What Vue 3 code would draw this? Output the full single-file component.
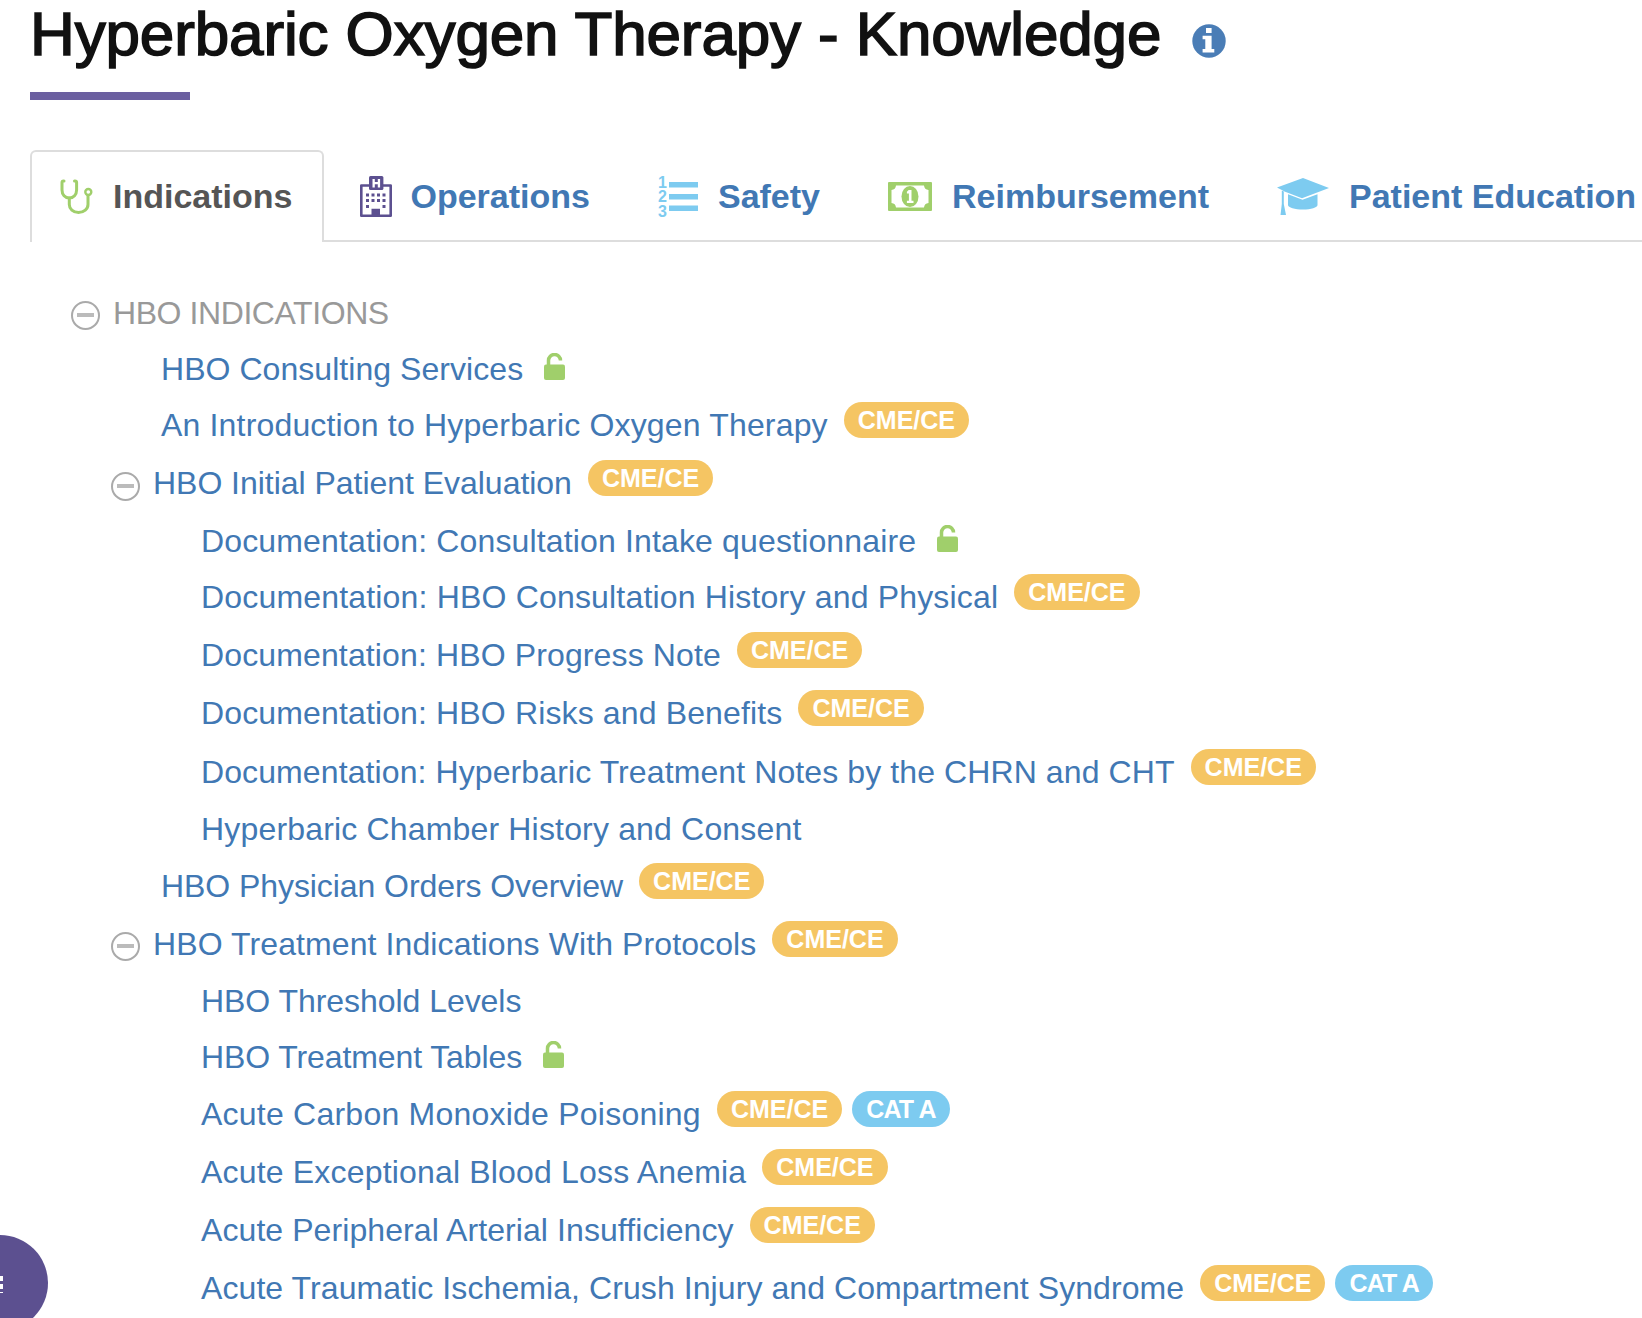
<script setup>
// track nudges each label's letter-spacing so its width follows the original font
const rows = [
  { text: 'HBO INDICATIONS', level: 'head', toggle: true, track: -0.42 },
  { text: 'HBO Consulting Services', level: 'one', lock: true, track: 0.05 },
  { text: 'An Introduction to Hyperbaric Oxygen Therapy', level: 'one', badges: ['CME/CE'], track: 0.17 },
  { text: 'HBO Initial Patient Evaluation', level: 'group', toggle: true, badges: ['CME/CE'], track: -0.03 },
  { text: 'Documentation: Consultation Intake questionnaire', level: 'two', lock: true, track: 0.15 },
  { text: 'Documentation: HBO Consultation History and Physical', level: 'two', badges: ['CME/CE'], track: 0.18 },
  { text: 'Documentation: HBO Progress Note', level: 'two', badges: ['CME/CE'], track: 0.13 },
  { text: 'Documentation: HBO Risks and Benefits', level: 'two', badges: ['CME/CE'], track: 0.14 },
  { text: 'Documentation: Hyperbaric Treatment Notes by the CHRN and CHT', level: 'two', badges: ['CME/CE'], track: 0.1 },
  { text: 'Hyperbaric Chamber History and Consent', level: 'two', track: 0.17 },
  { text: 'HBO Physician Orders Overview', level: 'one', badges: ['CME/CE'], track: -0.07 },
  { text: 'HBO Treatment Indications With Protocols', level: 'group', toggle: true, badges: ['CME/CE'], track: 0.1 },
  { text: 'HBO Threshold Levels', level: 'two', track: -0.05 },
  { text: 'HBO Treatment Tables', level: 'two', lock: true, track: -0.1 },
  { text: 'Acute Carbon Monoxide Poisoning', level: 'two', badges: ['CME/CE', 'CAT A'], track: 0.23 },
  { text: 'Acute Exceptional Blood Loss Anemia', level: 'two', badges: ['CME/CE'], track: 0.18 },
  { text: 'Acute Peripheral Arterial Insufficiency', level: 'two', badges: ['CME/CE'], track: 0.08 },
  { text: 'Acute Traumatic Ischemia, Crush Injury and Compartment Syndrome', level: 'two', badges: ['CME/CE', 'CAT A'], track: 0.08 }
]
</script>

<template>
  <div class="page">
    <header class="title-wrap">
      <h1 class="title">Hyperbaric Oxygen Therapy - Knowledge</h1>
      <svg class="info" viewBox="0 0 34 34">
        <circle cx="17" cy="17" r="16.700" fill="#4a7db6" />
        <path d="M14 4h5.600v5H14zM10.600 11.700h9v13.200h2.700v3.500H10.600v-3.500h2.700v-9.700h-2.700z" fill="#fff" />
      </svg>
    </header>
    <div class="rule"></div>

    <nav class="tabs">
      <a class="tab active">
        <svg class="ico" width="33" height="35" viewBox="0 0 33 35" fill="none" stroke="#a0cf6b" stroke-width="3" stroke-linecap="round">
          <path d="M4 2H3.500Q2 2 2 3.500V11c0 4.500 3 8 7.300 8s7.300-3.500 7.300-8V3.500Q16.600 2 15 2h-.5" />
          <path d="M9.300 19v6.500c0 4.500 3.700 8 9.200 8s9.500-3.500 9.500-8V16.500" />
          <circle cx="28.300" cy="13" r="3" stroke-width="2.400" />
        </svg>
        <span>Indications</span>
      </a>
      <a class="tab narrow">
        <svg class="ico" width="32" height="41" viewBox="0 0 32 41">
          <path d="M1.300 9.500h29.400v30.200H1.300z" fill="#fff" stroke="#5c5090" stroke-width="2.600" stroke-linejoin="round" />
          <rect x="9" width="14.400" height="14" rx="1.500" fill="#5c5090" />
          <path d="M12.500 3h2.300v3h3V3h2.300v8.500h-2.300V8.300h-3v3.200h-2.300z" fill="#fff" />
          <path d="M6 17.500h3v3H6zM11.500 17.500h3v3h-3zM17 17.500h3v3h-3zM22.500 17.500h3v3h-3zM6 23h3v3H6zM11.500 23h3v3h-3zM17 23h3v3h-3zM22.500 23h3v3h-3zM6 29h3v3H6zM22.500 29h3v3h-3zM11.500 32.700H20V41h-8.500z" fill="#5c5090" />
        </svg>
        <span>Operations</span>
      </a>
      <a class="tab">
        <svg class="ico list-ico" width="40" height="49" viewBox="0 -4 40 49" fill="#7dcbf0">
          <rect x="11" y="6" width="29" height="5.500" />
          <rect x="11" y="18" width="29" height="5.500" />
          <rect x="11" y="29.500" width="29" height="5.500" />
          <text x="0" y="11.500" class="num">1</text>
          <text x="0" y="25.500" class="num">2</text>
          <text x="0" y="40.500" class="num">3</text>
        </svg>
        <span>Safety</span>
      </a>
      <a class="tab">
        <svg class="ico" width="44" height="29" viewBox="0 0 44 29">
          <rect width="44" height="29" rx="1" fill="#a0cf6b" />
          <path d="M8 3.500h28a5 5 0 0 0 4.500 4.500v13a5 5 0 0 0-4.500 4.500H8A5 5 0 0 0 3.500 21V8A5 5 0 0 0 8 3.500z" fill="#fff" />
          <ellipse cx="22" cy="14.500" rx="8.500" ry="10.500" fill="#a0cf6b" />
          <path d="M20.700 8h2.800v10.800h2V21h-6.600v-2.200h2v-7.300h-2V9.800z" fill="#fff" />
        </svg>
        <span>Reimbursement</span>
      </a>
      <a class="tab">
        <svg class="ico" width="52" height="37" viewBox="0 0 52 37" fill="#7dcbf0">
          <path d="M26 0l26 10-27 10.200L7.500 13.500 4.800 12 0 9.500z" />
          <path d="M11 16.300l14.500 5.500 15-5.500V27c0 2.500-6.500 4.500-14.500 4.500S11 29.500 11 27z" />
          <path d="M4.800 12.500l2 1V26l2.200 11H3.500l1.300-11z" />
        </svg>
        <span>Patient Education</span>
      </a>
      <div class="tab-line"></div>
    </nav>

    <ul class="tree">
      <li v-for="row in rows" :key="row.text" class="row" :class="[row.level, { tall: row.badges }]">
        <span v-if="row.toggle" class="toggle"></span>
        <a class="label" :style="{ letterSpacing: row.track + 'px' }">{{ row.text }}</a>
        <svg v-if="row.lock" class="lock" width="21" height="27" viewBox="0 0 21 27">
          <path d="M4.500 12V7.500a6 6 0 0 1 12 0" fill="none" stroke="#a0cf6b" stroke-width="3.500" />
          <rect y="11.500" width="21" height="15.500" rx="2" fill="#a0cf6b" />
        </svg>
        <span v-if="row.badges" class="badges">
          <span v-for="b in row.badges" :key="b" class="badge" :class="{ cat: b === 'CAT A' }">{{ b }}</span>
        </span>
      </li>
    </ul>

    <div class="chat"><span class="chat-mark"></span></div>
  </div>
</template>

<style scoped>
.page {
  height: 1318px;
  overflow: hidden;
  position: relative;
  background: #fff;
  font-family: "Liberation Sans", Arial, sans-serif;
}

.title-wrap {
  display: flex;
  align-items: flex-start;
  padding-left: 30px;
  height: 92px;
}

.title {
  margin: 0;
  font-size: 62px;
  line-height: 68px;
  font-weight: 400;
  color: #111;
  -webkit-text-stroke: 1.6px #111;
  letter-spacing: -0.13px;
  white-space: nowrap;
}

.info {
  width: 34px;
  height: 34px;
  margin: 24px 0 0 31px;
}

.rule {
  width: 160px;
  height: 8px;
  margin-left: 30px;
  background: #6b5fa0;
}

.tabs {
  display: flex;
  margin: 50px 0 0 30px;
  height: 92px;
  position: relative;
}

.tab {
  display: flex;
  align-items: center;
  gap: 20px;
  padding: 0 30px 2px;
  border: 2px solid transparent;
  border-bottom: none;
  margin-right: 4px;
  font-size: 34px;
  font-weight: 700;
  color: #4178b4;
  white-space: nowrap;
  position: relative;
  z-index: 1;
}

.tab.active {
  padding-left: 28px;
  color: #555;
  background: #fff;
  border-color: #ddd;
  border-radius: 6px 6px 0 0;
}

.tab.narrow {
  gap: 18px;
}

.ico {
  flex: none;
}

.list-ico {
  margin: -4px 0;
}

.num {
  font-size: 16px;
  font-weight: 700;
  font-family: "Liberation Sans", Arial, sans-serif;
}

.tab-line {
  position: absolute;
  left: 0;
  right: 0;
  bottom: 0;
  height: 2px;
  background: #ddd;
}

.tree {
  list-style: none;
  margin: 0;
  padding: 43px 0 0;
}

.row {
  display: flex;
  align-items: center;
  box-sizing: border-box;
  height: 56px;
  font-size: 32px;
  color: #4178b4;
  white-space: nowrap;
}

.row.tall {
  height: 58.1px;
  padding-bottom: 1px;
}

.row.head {
  color: #999;
  padding-left: 71px;
}

.row.one {
  padding-left: 161px;
}

.row.group {
  padding-left: 111px;
}

.row.two {
  padding-left: 201px;
}

.toggle {
  flex: none;
  width: 29px;
  height: 29px;
  margin: 5px 13px 0 0;
  box-sizing: border-box;
  border: 2px solid #aaa;
  border-radius: 50%;
  position: relative;
}

.toggle::after {
  content: "";
  position: absolute;
  left: 4px;
  right: 4px;
  top: 10px;
  height: 4px;
  background: #bbb;
}

.lock {
  margin: -6px 0 0 21px;
}

.badges {
  display: flex;
  gap: 10px;
  margin: -11px 0 0 16px;
}

.badge {
  height: 36px;
  line-height: 36px;
  padding: 0 14px;
  border-radius: 18px;
  background: #f5c563;
  color: #fff;
  font-size: 25px;
  font-weight: 700;
}

.badge.cat {
  background: #7dcbf0;
  letter-spacing: -0.8px;
}

.chat {
  position: absolute;
  left: -48px;
  top: 1235px;
  width: 96px;
  height: 96px;
  border-radius: 50%;
  background: #5c5090;
}

.chat-mark {
  position: absolute;
  left: 48px;
  top: 41px;
  width: 3px;
  height: 17px;
  background: repeating-linear-gradient(#fff 0 5px, transparent 5px 8px);
}
</style>

<style>
body {
  margin: 0;
  background: #fff;
}
</style>
